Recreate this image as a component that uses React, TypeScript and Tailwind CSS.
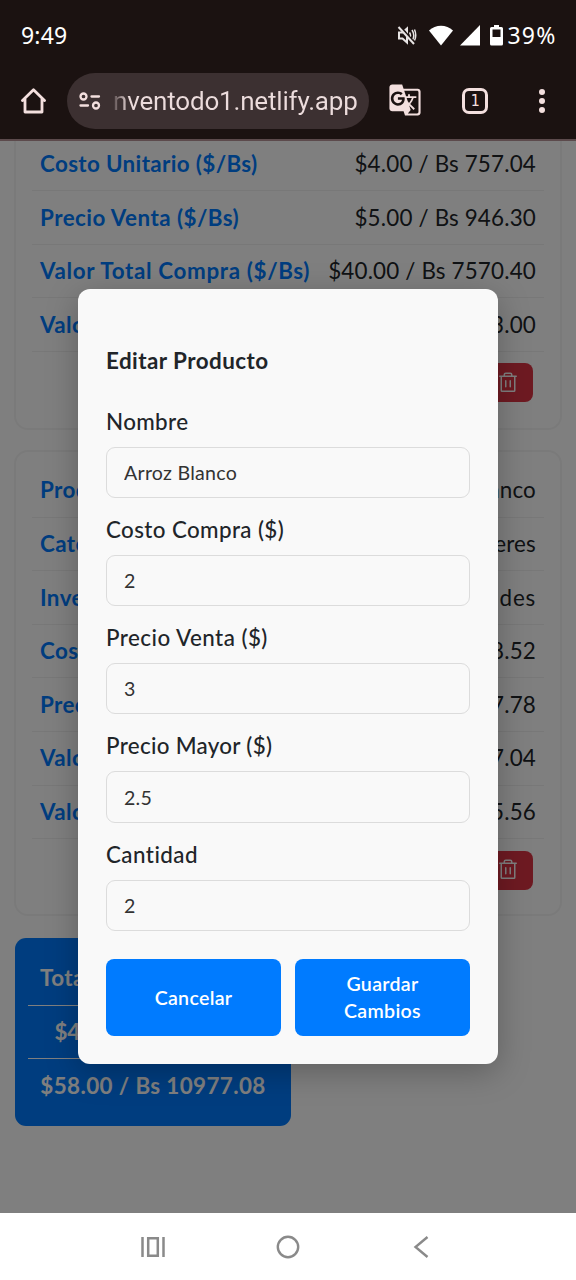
import { useState } from "react";
import { MdGTranslate } from "react-icons/md";
import { PiTrash } from "react-icons/pi";
import clsx from "clsx";

type Row = {
  label: string;
  value: string;
  spacing?: string;
  valueSpacing?: string;
};

const firstProduct: Row[] = [
  { label: "Costo Unitario ($/Bs)", value: "$4.00 / Bs 757.04", spacing: "tracking-[0.36px]" },
  { label: "Precio Venta ($/Bs)", value: "$5.00 / Bs 946.30", spacing: "tracking-[0.46px]" },
  { label: "Valor Total Compra ($/Bs)", value: "$40.00 / Bs 7570.40", spacing: "tracking-[0.66px]" },
  { label: "Valor Total Venta ($/Bs)", value: "$50.00 / Bs 9463.00" },
];

const secondProduct: Row[] = [
  { label: "Producto", value: "Arroz Blanco" },
  { label: "Categoría", value: "Víveres" },
  { label: "Inventario", value: "2 unidades", valueSpacing: "tracking-[0.8px]" },
  { label: "Costo Unitario ($/Bs)", value: "$2.00 / Bs 378.52" },
  { label: "Precio Venta ($/Bs)", value: "$3.00 / Bs 567.78" },
  { label: "Valor Total Compra ($/Bs)", value: "$4.00 / Bs 757.04" },
  { label: "Valor Total Venta ($/Bs)", value: "$6.00 / Bs 1135.56" },
];

const fields = [
  { name: "nombre", label: "Nombre", spacing: "tracking-[0.35px]" },
  { name: "costo", label: "Costo Compra ($)", spacing: "tracking-[0.38px]" },
  { name: "precio", label: "Precio Venta ($)", spacing: "tracking-[0.46px]" },
  { name: "mayor", label: "Precio Mayor ($)", spacing: "tracking-[0.3px]" },
  { name: "cantidad", label: "Cantidad", spacing: "tracking-[0.45px]" },
];

function StatusBar() {
  return (
    <div className="flex h-[71px] items-center justify-between pl-[21px] pr-5 font-['Noto_Sans',sans-serif] text-[23px] text-white">
      <span className="tracking-[0.2px]">9:49</span>
      <div className="flex items-center">
        {/* muted speaker */}
        <svg className="mr-3 h-[19px] w-5" viewBox="0 0 20 19" fill="none" stroke="#e8e4e4" strokeWidth="2">
          <path d="M2 6.500v6h3.500l4.500 4V2.500L5.500 6.500z" />
          <path d="M12.500 6.500q2 3 0 6M15 4q3.600 5.500 0 11M17.500 3.500q2.500 6 0 11" strokeWidth="1.500" />
          <path d="M3 1l15 17" stroke="#1b1211" strokeWidth="3" />
          <path d="M1.500 1l15.500 17" />
        </svg>
        <svg className="mr-[7px] h-[21px] w-6" viewBox="0 0 24 21" fill="white">
          <path d="M0 5.500C6.500-1 17.500-1 24 5.500L12 20.500z" />
        </svg>
        <svg className="mr-2.5 h-[21px] w-5" viewBox="0 0 20 21" fill="white">
          <path d="M20 0v20.500H0z" />
        </svg>
        <svg className="mr-1 h-[21px] w-[13px]" viewBox="0 0 13 21">
          <path d="M4 0h5v2h2.500q1.500 0 1.500 1.500v15.500q0 1.500-1.500 1.500h-10q-1.500 0-1.500-1.500V3.500Q0 2 1.500 2H4z" fill="white" />
          <path d="M2.500 4.500h8v7.500h-8z" fill="#1b1211" />
        </svg>
        <span className="-mr-[0.500px] tracking-[1.200px]">39%</span>
      </div>
    </div>
  );
}

function BrowserBar() {
  return (
    <div className="flex h-[70px] items-start border-b-2 border-[#5c4a4c] pt-0.5 pl-[21px]">
      <svg className="mt-[15px] h-[26px] w-[25px]" viewBox="0 0 25 26" fill="none" stroke="#f3dfde" strokeWidth="2.800" strokeLinejoin="round" strokeLinecap="round">
        <path d="M1.500 12.500L12.500 1.800L23.500 12.500M4 11v13h17V11" />
      </svg>
      <div className="ml-[21px] flex h-14 w-[302px] items-center rounded-full bg-[#3c3031] pl-3">
        <svg className="h-[18px] w-[22px]" viewBox="0 0 22 18" fill="none" stroke="#f3dfde" strokeWidth="2.300" strokeLinecap="round">
          <circle cx="4.500" cy="4.500" r="3" />
          <path d="M12.500 4.500h7.500M1.500 13.500h7.500" />
          <circle cx="17" cy="13.500" r="3" />
        </svg>
        <span className="ml-3 bg-linear-to-r from-[#5a4d4e] to-[#ecdcdc] to-[16px] bg-clip-text font-[Roboto,sans-serif] text-[26px] tracking-[-0.180px] whitespace-nowrap text-transparent">
          nventodo1.netlify.app
        </span>
      </div>
      <MdGTranslate className="mt-[10px] ml-[19px] h-[34px] w-[34px] text-[#f3dfde]" />
      <div className="mt-[15px] ml-10 flex h-[26px] w-[26px] items-center justify-center rounded-[7px] border-[3px] border-[#f3dfde] font-['DejaVu_Sans_Mono',monospace] text-[15px] text-[#f3dfde]">
        1
      </div>
      <div className="mt-4 ml-[51px] flex flex-col gap-[3px]">
        <span className="h-[6px] w-[6px] rounded-full bg-[#f3dfde]" />
        <span className="h-[6px] w-[6px] rounded-full bg-[#f3dfde]" />
        <span className="h-[6px] w-[6px] rounded-full bg-[#f3dfde]" />
      </div>
    </div>
  );
}

function ProductCard({ rows, className }: { rows: Row[]; className?: string }) {
  return (
    <div className={clsx("rounded-[14px] border-2 border-[#f5f5f5] px-4", className)}>
      {rows.map((row) => (
        <div
          key={row.label}
          className="flex h-[53.600px] items-center justify-between border-b border-[#f1f1f1] px-2 text-[22.400px] whitespace-nowrap"
        >
          <span className={clsx("font-bold text-[#007bff]", row.spacing ?? "tracking-[0.4px]")}>{row.label}</span>
          <span className={clsx("text-[#212529]", row.valueSpacing ?? "tracking-[0.18px]")}>{row.value}</span>
        </div>
      ))}
      <div className="mt-[11.500px] mr-[11px] flex justify-end">
        <button className="flex h-[39px] w-[51px] items-center justify-center rounded-lg bg-[#dc3545] text-white">
          <PiTrash className="h-6 w-6" />
        </button>
      </div>
    </div>
  );
}

function Totals() {
  return (
    <div className="mt-[22px] ml-px h-[188px] w-[276px] rounded-[11px] bg-[#007bff] px-[13px] pt-[13.500px] text-[22.400px] font-bold whitespace-nowrap text-white">
      <div className="flex h-[54px] items-center border-b border-white px-3 tracking-[0.4px]">Total Inventario:</div>
      <div className="flex h-[53.500px] items-center justify-center border-b border-white tracking-[-0.4px]">
        $44.00 / Bs 8327.44
      </div>
      <div className="flex h-[53.500px] items-center justify-center tracking-[0.400px]">$58.00 / Bs 10977.08</div>
    </div>
  );
}

function EditModal() {
  const [values, setValues] = useState<Record<string, string>>({
    nombre: "Arroz Blanco",
    costo: "2",
    precio: "3",
    mayor: "2.5",
    cantidad: "2",
  });

  return (
    <div className="absolute inset-0 flex items-center justify-center bg-black/50 pb-0.5">
      <form
        className="h-[775px] w-[420px] rounded-xl bg-[#f9f9f9] px-7 pt-[55px] text-[#212529] shadow-[0_8px_32px_rgba(0,0,0,0.25)]"
        onSubmit={(e) => e.preventDefault()}
      >
        <h2 className="mb-[27px] text-[22.400px] leading-[34px] font-bold tracking-[0.460px]">Editar Producto</h2>
        {fields.map((field) => (
          <div key={field.name} className="mb-[14.900px]">
            <label
              htmlFor={field.name}
              className={clsx("mb-2 block text-[22.400px] leading-[34px] font-medium", field.spacing)}
            >
              {field.label}
            </label>
            <input
              id={field.name}
              className="block h-[51.400px] w-full rounded-[9px] border border-[#dcdcdc] bg-transparent px-[17px] text-[19.600px] tracking-[0.260px] text-[#333] outline-none"
              value={values[field.name]}
              onChange={(e) => setValues({ ...values, [field.name]: e.target.value })}
            />
          </div>
        ))}
        <div className="mt-[27.600px] grid grid-cols-2 gap-[14px] text-[19.600px] leading-[27px] font-semibold tracking-[0.300px] text-white">
          <button type="button" className="h-[77px] rounded-lg bg-[#007bff]">
            Cancelar
          </button>
          <button type="submit" className="h-[77px] rounded-lg bg-[#007bff] px-10">
            Guardar Cambios
          </button>
        </div>
      </form>
    </div>
  );
}

function NavBar() {
  return (
    <div className="flex h-[67px] items-center bg-white pl-[141px]">
      <svg className="h-[22px] w-6" viewBox="0 0 24 22" fill="none" stroke="#8a8a8a" strokeWidth="2.500">
        <path d="M1.500 1v20M22.500 1v20M7.200 2.200h9.600v17.600H7.200z" />
      </svg>
      <svg className="ml-[111px] h-6 w-6" viewBox="0 0 24 24" fill="none" stroke="#8a8a8a" strokeWidth="2.400">
        <circle cx="12" cy="12" r="10.200" />
      </svg>
      <svg className="ml-[113px] h-[22px] w-4" viewBox="0 0 16 22" fill="none" stroke="#8a8a8a" strokeWidth="2.400">
        <path d="M14.500 1L2.500 11l12 10" />
      </svg>
    </div>
  );
}

export default function App() {
  return (
    <div className="flex h-[1280px] w-[576px] flex-col overflow-hidden bg-[#1b1211] font-[Lato,sans-serif]">
      <StatusBar />
      <BrowserBar />
      <main className="relative h-[1072px] overflow-hidden bg-white px-3.5">
        <ProductCard rows={firstProduct} className="-mt-[3.500px] h-[292px] rounded-t-none border-t-0" />
        <ProductCard rows={secondProduct} className="mt-[20.500px] h-[466px] pt-3" />
        <Totals />
        <EditModal />
      </main>
      <NavBar />
    </div>
  );
}
